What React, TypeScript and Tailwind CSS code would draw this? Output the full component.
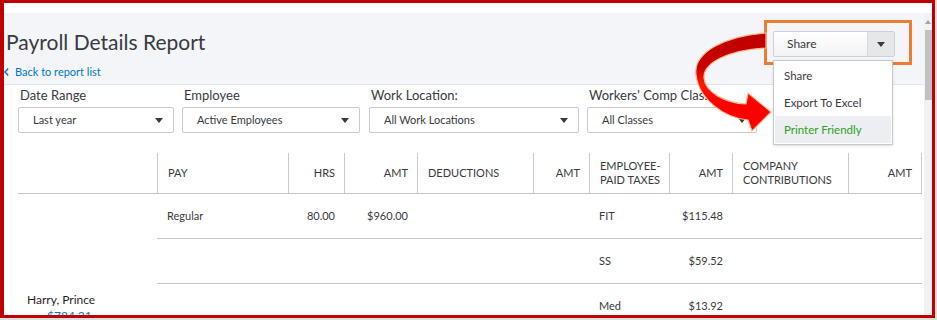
import React from "react";

const font = { fontFamily: "Lato, 'Open Sans', sans-serif" };

function Caret({ color = "#393a3d" }: { color?: string }) {
  return (
    <svg width="8" height="5" viewBox="0 0 8 5">
      <path d="M0 0 L8 0 L4 5 Z" fill={color} />
    </svg>
  );
}

function Select({ label, value, width }: { label: string; value: string; width: string }) {
  return (
    <div className={`flex flex-col ${width}`}>
      <div className="text-[13px] leading-[18px] text-[#393a3d] pl-[2px] whitespace-nowrap">{label}</div>
      <div className="mt-[3px] h-[26px] border border-[#c9cacc] rounded-[2px] bg-white flex items-center justify-between pl-[14px] pr-[10px]">
        <span className="text-[11px] text-[#393a3d] whitespace-nowrap">{value}</span>
        <Caret />
      </div>
    </div>
  );
}

const cols = "grid-cols-[139px_131px_56px_73px_116px_56px_80px_63px_116px_74px]";

type Cell = { text: string; right?: boolean };

function HeadCell({ text, right, last }: { text: React.ReactNode; right?: boolean; last?: boolean }) {
  return (
    <div
      className={`h-[40px] border-l border-[#c9cbce] ${last ? "border-r" : ""} flex items-center ${
        right ? "justify-end pr-[9px] text-right" : "pl-[10px]"
      } text-[11px] leading-[14px] text-[#393a3d]`}
    >
      {text}
    </div>
  );
}

function DataCell({ c }: { c: Cell }) {
  return (
    <div
      className={`h-[45px] border-b border-[#c3c6cb] flex items-center ${
        c.right ? "justify-end pr-[9px]" : "pl-[10px]"
      } text-[11px] text-[#393a3d] whitespace-nowrap`}
    >
      {c.text}
    </div>
  );
}

export default function App() {
  const rows: Cell[][] = [
    [
      { text: "Regular" },
      { text: "80.00", right: true },
      { text: "$960.00", right: true },
      { text: "" },
      { text: "", right: true },
      { text: "FIT" },
      { text: "$115.48", right: true },
      { text: "" },
      { text: "", right: true },
    ],
    [
      { text: "" },
      { text: "", right: true },
      { text: "", right: true },
      { text: "" },
      { text: "", right: true },
      { text: "SS" },
      { text: "$59.52", right: true },
      { text: "" },
      { text: "", right: true },
    ],
    [
      { text: "" },
      { text: "", right: true },
      { text: "", right: true },
      { text: "" },
      { text: "", right: true },
      { text: "Med" },
      { text: "$13.92", right: true },
      { text: "" },
      { text: "", right: true },
    ],
  ];

  return (
    <div className="w-[937px] h-[320px] bg-[#dedede] overflow-hidden relative" style={font}>
      <div className="w-[935px] h-[318px] border-t-[3px] border-l-[4px] border-r-[3px] border-b-[3px] border-[#c00000] bg-white flex overflow-hidden">
        {/* main content */}
        <div className="w-[920px] flex flex-col">
          <div className="h-[10px] bg-white shrink-0" />
          <div className="h-[72px] shrink-0 bg-[#f4f5f8] border-b border-[#e3e5e8] flex justify-between items-start">
            <div className="pt-[15px] pl-[2px] flex flex-col">
              <div className="text-[21px] leading-[28px] text-[#393a3d]">Payroll Details Report</div>
              <div className="mt-[8px] h-[16px] flex items-center text-[11px] text-[#0077c5]">
                <svg width="5" height="8" viewBox="0 0 5 8" className="-ml-[2px] mr-[6px]">
                  <path d="M4.2 0.6 L1 4 L4.2 7.4" fill="none" stroke="#0077c5" strokeWidth="1.4" />
                </svg>
                <span>Back to report list</span>
              </div>
            </div>
            <div className="relative mt-[18px] mr-[29px]">
              <div className="w-[122px] h-[26px] border border-[#cfd0d2] rounded-[2px] flex overflow-hidden">
                <div className="flex-1 bg-gradient-to-b from-white to-[#f3f3f3] flex items-center pl-[13px] text-[12px] text-[#393a3d]">
                  Share
                </div>
                <div className="w-[27px] bg-[#e6e7e9] border-l border-[#d8d9db] flex items-center justify-center">
                  <Caret />
                </div>
              </div>
              <div className="absolute top-[29px] left-0 w-[120px] h-[85px] border border-[#c6c8cb] bg-white shadow-sm pt-[1px] z-10">
                <div className="h-[27px] flex items-center pl-[10px] text-[11.5px] text-[#393a3d]">Share</div>
                <div className="h-[27px] flex items-center pl-[10px] text-[11.5px] text-[#393a3d]">Export To Excel</div>
                <div className="h-[27px] mx-[1px] flex items-center pl-[9px] text-[11.5px] text-[#2ca01c] bg-[#eceef1]">
                  Printer Friendly
                </div>
              </div>
            </div>
          </div>

          {/* filters */}
          <div className="pl-[14px] pt-[1px] flex gap-[8px]">
            <Select label="Date Range" value="Last year" width="w-[156px]" />
            <Select label="Employee" value="Active Employees" width="w-[178px] mr-[1px]" />
            <Select label="Work Location:" value="All Work Locations" width="w-[210px]" />
            <Select label="Workers' Comp Class" value="All Classes" width="w-[170px]" />
          </div>

          {/* table */}
          <div className={`ml-[14px] mt-[20px] grid ${cols}`}>
            <div className="h-[41px] border-b border-[#c3c6cb]" />
            <div className="col-span-9 grid grid-cols-[131px_56px_73px_116px_56px_80px_63px_116px_74px] border-b border-[#c3c6cb]">
              <HeadCell text="PAY" />
              <HeadCell text="HRS" right />
              <HeadCell text="AMT" right />
              <HeadCell text="DEDUCTIONS" />
              <HeadCell text="AMT" right />
              <HeadCell
                text={
                  <span>
                    EMPLOYEE-
                    <br />
                    PAID TAXES
                  </span>
                }
              />
              <HeadCell text="AMT" right />
              <HeadCell
                text={
                  <span>
                    COMPANY
                    <br />
                    CONTRIBUTIONS
                  </span>
                }
              />
              <HeadCell text="AMT" right last />
            </div>
            <div className="row-span-3 pt-[98px] pl-[9px]">
              <div className="text-[12px] leading-[16px] text-[#1f1f1f]">Harry, Prince</div>
              <div className="text-[12px] leading-[16px] text-[#0077c5] pl-[20px]">$784.21</div>
            </div>
            {rows.map((r, i) => r.map((c, j) => <DataCell key={`${i}-${j}`} c={c} />))}
          </div>
        </div>
        {/* scrollbar */}
        <div className="w-[8px] flex flex-col">
          <div className="h-[10px] bg-white" />
          <div className="flex-1 bg-[#f1f1f1] flex flex-col items-center">
            <svg width="6" height="4" viewBox="0 0 6 4" className="mt-[7px]">
              <path d="M0 4 L3 0 L6 4 Z" fill="#a3a3a3" />
            </svg>
            <div className="mt-[6px] w-[7px] ml-[1px] h-[70px] bg-[#c1c1c1]" />
          </div>
        </div>
      </div>

      {/* orange annotation box */}
      <div className="absolute left-[764px] top-[20px] w-[148px] h-[45px] border-[3px] border-[#ed7d31]" />

      {/* red curved arrow */}
      <svg className="absolute left-0 top-0 pointer-events-none" width="937" height="320" viewBox="0 0 937 320">
        <defs>
          <linearGradient id="ag" x1="0" y1="40" x2="0" y2="100" gradientUnits="userSpaceOnUse">
            <stop offset="0" stopColor="#c00000" />
            <stop offset="0.45" stopColor="#c80000" />
            <stop offset="0.75" stopColor="#ff1a00" />
            <stop offset="1" stopColor="#ff0000" />
          </linearGradient>
        </defs>
        <path
          d="M766 33 C725 36 693 52 696 75 C699 100 725 118 748 120 L752 131 L771 112 L748 93 L746 104 C725 103 705 92 704 78 C703 62 730 50 766 48 Z"
          fill="url(#ag)"
          stroke="#f7b98f"
          strokeWidth="1.2"
        />
      </svg>
    </div>
  );
}
